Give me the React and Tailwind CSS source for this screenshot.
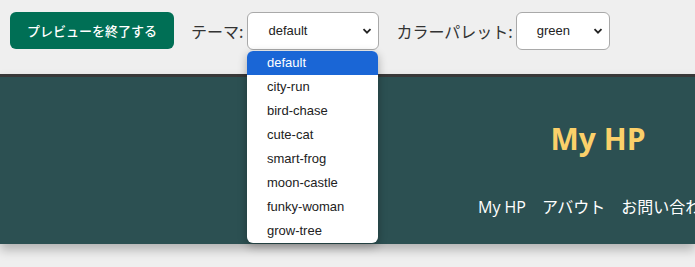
import React from 'react';

const themes = ['default', 'city-run', 'bird-chase', 'cute-cat', 'smart-frog', 'moon-castle', 'funky-woman', 'grow-tree'];

function Chevron() {
  return (
    <svg className="w-[10px] h-[10px]" viewBox="0 0 10 10">
      <path d="M1.5 3.2 L5 6.7 L8.5 3.2" fill="none" stroke="#222" strokeWidth="1.8" />
    </svg>
  );
}

function FakeSelect({ value, width }) {
  return (
    <div
      className={`h-[38px] ${width} bg-white border border-[#a9a9a9] rounded-[6px] flex items-center justify-between pl-[20px] pr-[6px] text-[13px] text-[#222]`}
      style={{ fontFamily: 'Arial, "Liberation Sans", sans-serif' }}
    >
      <span>{value}</span>
      <Chevron />
    </div>
  );
}

export default function App() {
  return (
    <div className="relative w-[695px] h-[267px] overflow-hidden bg-[#efefef]" style={{ fontFamily: '"Noto Sans CJK JP", sans-serif' }}>
      {/* Preview toolbar */}
      <div className="h-[74px] flex items-start pl-[10px] pt-[12px]">
        <button className="h-[37px] w-[164px] rounded-[6px] bg-[#006f55] text-white text-[13px] font-medium">
          プレビューを終了する
        </button>
        <span className="ml-[17px] mr-[4px] h-[38px] flex items-center text-[16px] text-[#333]">テーマ:</span>
        <FakeSelect value="default" width="w-[132px]" />
        <span className="ml-[17px] mr-[3px] h-[38px] flex items-center text-[16px] text-[#333]">カラーパレット:</span>
        <FakeSelect value="green" width="w-[94px]" />
      </div>

      {/* Site header */}
      <div className="h-[170px] border-t-[3px] border-[#383838] bg-[#2c5052] shadow-[0_6px_10px_rgba(0,0,0,0.25)]">
        <div className="flex flex-col items-center w-[240px] ml-[478px] pt-[42px]" style={{ fontFamily: '"Open Sans", "Noto Sans CJK JP", sans-serif' }}>
          <h1 className="text-[30px] font-bold text-[#fbd06a] leading-[40px]">My HP</h1>
          <nav className="mt-[36px] flex gap-[16px] text-[16px] text-white whitespace-nowrap self-start">
            <span>My HP</span>
            <span>アバウト</span>
            <span>お問い合わせ</span>
          </nav>
        </div>
      </div>

      {/* Open theme dropdown */}
      <div
        className="absolute left-[247px] top-[51px] w-[131px] bg-white rounded-[6px] overflow-hidden shadow-[0_3px_10px_rgba(0,0,0,0.3)] text-[13px] text-[#222]"
        style={{ fontFamily: 'Arial, "Liberation Sans", sans-serif' }}
      >
        {themes.map((t, i) => (
          <div key={t} className={`h-[24px] flex items-center pl-[20px] ${i === 0 ? 'bg-[#1a66d6] text-white' : ''}`}>
            {t}
          </div>
        ))}
      </div>
    </div>
  );
}
